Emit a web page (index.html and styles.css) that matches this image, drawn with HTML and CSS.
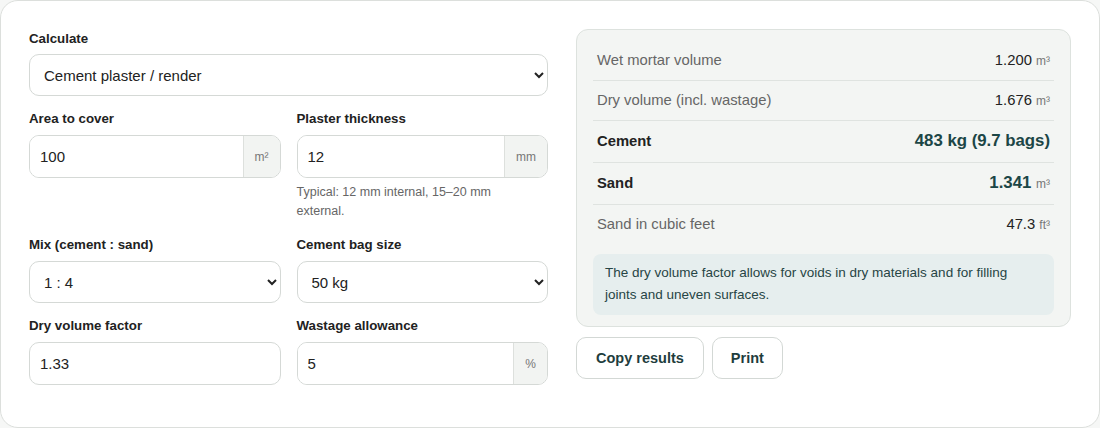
FILE: index.html
```html
<!DOCTYPE html>
<html lang="en">
<head>
    <meta charset="UTF-8">
    <meta name="viewport" content="width=device-width, initial-scale=1.0">
    <title>Cement Plaster Calculator</title>
    <link rel="stylesheet" href="styles.css">
</head>
<body>
    <div class="calc-card">
        <div class="calc-form">
            <div class="field">
                <label for="calc-type">Calculate</label>
                <select id="calc-type" class="control">
                    <option>Cement plaster / render</option>
                </select>
            </div>
            <div class="field-row">
                <div class="field">
                    <label for="area">Area to cover</label>
                    <div class="input-group">
                        <input id="area" class="control" type="text" value="100">
                        <span class="unit">m²</span>
                    </div>
                </div>
                <div class="field">
                    <label for="thickness">Plaster thickness</label>
                    <div class="input-group">
                        <input id="thickness" class="control" type="text" value="12">
                        <span class="unit">mm</span>
                    </div>
                    <p class="hint">Typical: 12 mm internal, 15–20 mm external.</p>
                </div>
            </div>
            <div class="field-row">
                <div class="field">
                    <label for="mix">Mix (cement : sand)</label>
                    <select id="mix" class="control">
                        <option>1 : 4</option>
                    </select>
                </div>
                <div class="field">
                    <label for="bag">Cement bag size</label>
                    <select id="bag" class="control">
                        <option>50 kg</option>
                    </select>
                </div>
            </div>
            <div class="field-row">
                <div class="field">
                    <label for="factor">Dry volume factor</label>
                    <input id="factor" class="control" type="text" value="1.33">
                </div>
                <div class="field">
                    <label for="wastage">Wastage allowance</label>
                    <div class="input-group">
                        <input id="wastage" class="control" type="text" value="5">
                        <span class="unit">%</span>
                    </div>
                </div>
            </div>
        </div>

        <div class="calc-results">
            <div class="results-panel">
                <div class="result-row">
                    <span class="result-label">Wet mortar volume</span>
                    <span class="result-value">1.200 <small>m³</small></span>
                </div>
                <div class="result-row">
                    <span class="result-label">Dry volume (incl. wastage)</span>
                    <span class="result-value">1.676 <small>m³</small></span>
                </div>
                <div class="result-row main">
                    <span class="result-label">Cement</span>
                    <span class="result-value">483 kg (9.7 bags)</span>
                </div>
                <div class="result-row main">
                    <span class="result-label">Sand</span>
                    <span class="result-value">1.341 <small>m³</small></span>
                </div>
                <div class="result-row last">
                    <span class="result-label">Sand in cubic feet</span>
                    <span class="result-value">47.3 <small>ft³</small></span>
                </div>
                <p class="note">The dry volume factor allows for voids in dry materials and for filling joints and uneven surfaces.</p>
            </div>
            <div class="actions">
                <button class="btn">Copy results</button>
                <button class="btn">Print</button>
            </div>
        </div>
    </div>
</body>
</html>
```

FILE: styles.css
```css
body {
    margin: 0;
    background-color: #f6f7f6;
    font-family: "Liberation Sans", Arial, sans-serif;
    color: #222;
}
.calc-card {
    display: grid;
    grid-template-columns: 519px 1fr;
    gap: 28px;
    height: 428px;
    box-sizing: border-box;
    padding: 28px;
    background-color: white;
    border: 1px solid #dcdfdc;
    border-radius: 18px;
}
.calc-form {
    display: flex;
    flex-direction: column;
    gap: 14px;
}
.field {
    display: flex;
    flex-direction: column;
    min-width: 0;
}
.field label {
    font-size: 13.3px;
    font-weight: bold;
    color: #222;
    line-height: 18px;
    margin-bottom: 7px;
}
.calc-form > .field:first-child label {
    margin-top: 1px;
    line-height: 17px;
}
.field-row {
    display: grid;
    grid-template-columns: 1fr 1fr;
    gap: 16px;
}
.control {
    height: 42px;
    box-sizing: border-box;
    width: 100%;
    border: 1px solid #d5d9d6;
    border-radius: 10px;
    background-color: white;
    font-family: "Liberation Sans", Arial, sans-serif;
    font-size: 15px;
    color: #222;
    padding: 0 10px;
}
select.control {
    padding: 0 8px 0 10px;
}
input.control {
    height: 43px;
}
.input-group {
    display: flex;
    height: 43px;
    border: 1px solid #d5d9d6;
    border-radius: 10px;
    overflow: hidden;
    box-sizing: border-box;
}
.input-group .control {
    border: none;
    border-radius: 0;
    height: 41px;
    flex: 1;
    min-width: 0;
}
.unit {
    display: flex;
    align-items: center;
    padding: 0 11px;
    background-color: #f2f4f2;
    border-left: 1px solid #dde0dd;
    font-size: 12px;
    color: #777;
}
.hint {
    margin: 5px 0 1px;
    max-width: 220px;
    font-size: 12.5px;
    line-height: 19px;
    color: #666;
}
.calc-results {
    display: flex;
    flex-direction: column;
    gap: 10px;
}
.results-panel {
    background-color: #f3f5f3;
    border: 1px solid #dde2de;
    border-radius: 12px;
    padding: 11px 16px 11px;
}
.result-row {
    display: flex;
    justify-content: space-between;
    align-items: baseline;
    padding: 10px 4px;
    border-bottom: 1px solid #dfe3e0;
    line-height: 19px;
}
.result-row.last {
    border-bottom: none;
}
.result-label {
    font-size: 14.8px;
    color: #666;
}
.result-value {
    font-size: 14.8px;
    color: #222;
}
.result-value small {
    font-size: 12px;
    font-weight: normal;
    line-height: 0;
    color: #777;
}
.result-row.main {
    line-height: 20px;
    padding-bottom: 11px;
}
.result-row.main .result-label {
    font-weight: bold;
    color: #222;
}
.result-row.main .result-value {
    font-size: 16.8px;
    font-weight: bold;
    color: #1c4646;
}
.note {
    margin: 10px 0 0;
    background-color: #e6eeee;
    border-radius: 8px;
    padding: 8px 12px 9px;
    font-size: 13.5px;
    line-height: 22px;
    color: #274545;
}
.actions {
    display: flex;
    gap: 8px;
}
.btn {
    height: 42px;
    padding: 0 19px;
    background-color: white;
    border: 1px solid #d3d8d5;
    border-radius: 10px;
    font-family: "Liberation Sans", Arial, sans-serif;
    font-size: 14.5px;
    font-weight: bold;
    color: #1e3d3d;
    cursor: pointer;
}
.btn + .btn {
    padding: 0 18px;
}
```
